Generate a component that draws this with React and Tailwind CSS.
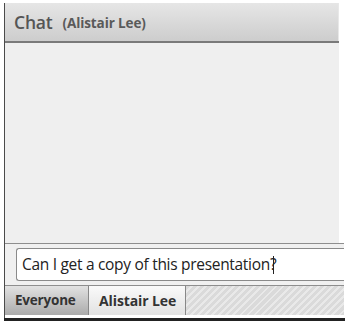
export default function App() {
  return (
    <div className="w-[345px] h-[321px] bg-white pt-[3px] pl-[4px] font-['Open_Sans',sans-serif]">
      <div className="flex flex-col border-l-[1.5px] border-[#4a4a4a] h-[315px]">
        {/* Header */}
        <div className="w-[334px] h-[38px] flex items-center gap-[10px] pl-[9px] pr-2 bg-gradient-to-b from-[#e6e6e6] to-[#cdcdcd] border-r border-[#e8e8e8]">
          <span className="text-[17.5px] font-semibold text-[#555] tracking-[-0.2px]">Chat</span>
          <span className="text-[13.5px] font-bold text-[#5a5a5a] mt-[2px] tracking-[-0.1px]">(Alistair Lee)</span>
        </div>
        <div className="w-[334px] h-[2px] bg-[#7a7a7a]" />

        {/* Messages */}
        <div className="w-[334px] h-[200px] bg-[#efefef]" />

        {/* Input */}
        <div className="w-[339px] h-[43px] bg-[#f0f0f0] border-y border-[#8e8e8e] pt-[4px] pl-[11px]">
          <div className="h-[33px] rounded-l-[3px] border border-r-0 border-[#8a8a8a] bg-white flex items-center pl-[5px]">
            <span className="text-[15.5px] text-[#222] tracking-[-0.3px]">Can I get a copy of this presentation?</span>
            <span className="w-px h-[18px] bg-[#222] -ml-[3px]" />
          </div>
        </div>

        {/* Tabs */}
        <div className="flex w-[339px] h-[29px]">
          <div className="w-[84px] flex items-center pl-[10px] bg-gradient-to-b from-[#e2e2e2] to-[#ababab] border-r border-[#888]">
            <span className="text-[13.5px] font-bold text-[#333] tracking-[-0.2px]">Everyone</span>
          </div>
          <div className="w-[97px] flex items-center pl-[10px] bg-gradient-to-b from-[#fafafa] to-[#e2e2e2] border-r border-[#888]">
            <span className="text-[14px] font-bold text-[#333] tracking-[-0.1px]">Alistair Lee</span>
          </div>
          <div className="flex-1 bg-[#dcdcdc] bg-[repeating-linear-gradient(135deg,#dadada_0px,#dadada_3px,#e9e9e9_3px,#e9e9e9_5px)]" />
        </div>
      </div>
      <div className="w-[341px] h-[3px] bg-[#222]" />
    </div>
  );
}
